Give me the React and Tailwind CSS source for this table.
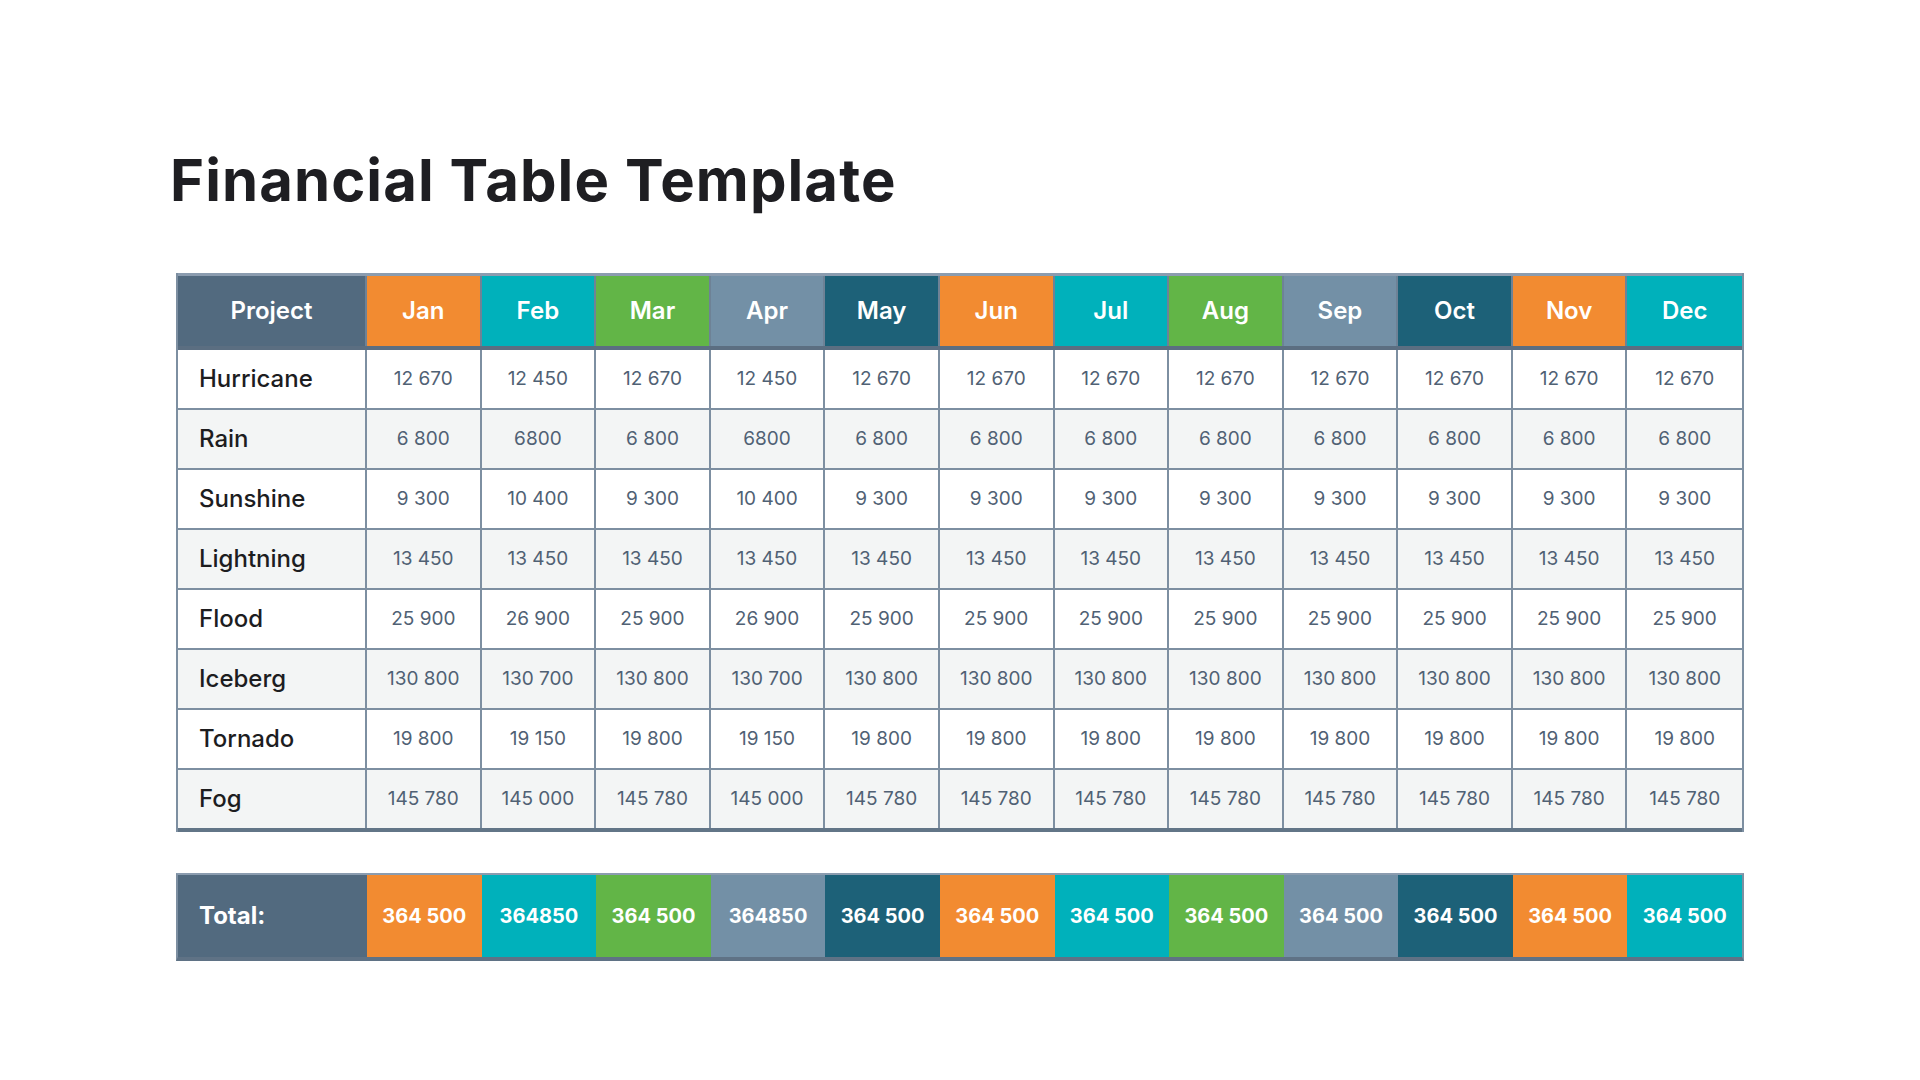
import React from "react";

// month header colours cycle through the same five swatches
const COLORS = {
  orange: "bg-[#f28b31]",
  teal: "bg-[#00b1bb]",
  green: "bg-[#62b547]",
  slate: "bg-[#7390a6]",
  dark: "bg-[#1d6178]",
};

const MONTHS = [
  ["Jan", COLORS.orange],
  ["Feb", COLORS.teal],
  ["Mar", COLORS.green],
  ["Apr", COLORS.slate],
  ["May", COLORS.dark],
  ["Jun", COLORS.orange],
  ["Jul", COLORS.teal],
  ["Aug", COLORS.green],
  ["Sep", COLORS.slate],
  ["Oct", COLORS.dark],
  ["Nov", COLORS.orange],
  ["Dec", COLORS.teal],
];

// first four months differ, the rest repeat the first value
function row(a, b) {
  return [a, b, a, b, ...Array(8).fill(a)];
}

const ROWS = [
  { name: "Hurricane", values: row("12 670", "12 450") },
  { name: "Rain", values: row("6 800", "6800") },
  { name: "Sunshine", values: row("9 300", "10 400") },
  { name: "Lightning", values: Array(12).fill("13 450") },
  { name: "Flood", values: row("25 900", "26 900") },
  { name: "Iceberg", values: row("130 800", "130 700") },
  { name: "Tornado", values: row("19 800", "19 150") },
  { name: "Fog", values: row("145 780", "145 000") },
];

const TOTALS = row("364 500", "364850");

const GRID = "grid grid-cols-[189px_repeat(12,minmax(0,1fr))]";

export default function App() {
  return (
    <div className="min-h-screen bg-white pl-[173px] pt-[151px] font-['Inter',sans-serif]">
      <h1 className="-ml-[3px] text-[58px] font-bold leading-none tracking-[1.1px] text-[#1e1e22]">
        Financial Table Template
      </h1>

      <div className="mt-[64px] ml-[3px] w-[1568px] border-x-2 border-[#7d8fa1]">
        {/* header */}
        <div className={`${GRID} h-[77px] border-t-[3px] border-b-4 border-t-[#8b9caf] border-b-[#5b6e81]`}>
          <div className="flex items-center justify-center bg-[#526a7f] border-r-2 border-[#6e8296] text-[24px] font-semibold text-white">
            Project
          </div>
          {MONTHS.map(([m, bg], i) => (
            <div
              key={m}
              className={`flex items-center justify-center ${bg} ${i < 11 ? "border-r-2 border-[#6e8296]" : ""} text-[24px] font-semibold text-white`}
            >
              {m}
            </div>
          ))}
        </div>

        {/* body */}
        {ROWS.map((r, ri) => (
          <div
            key={r.name}
            className={`${GRID} ${ri === ROWS.length - 1 ? "h-[62px] border-b-4 border-[#627587]" : "h-[60px] border-b-2 border-[#7d8fa1]"} ${ri % 2 ? "bg-[#f3f5f5]" : "bg-white"}`}
          >
            <div className="flex items-center border-r-2 border-[#7d8fa1] pl-[21px] text-[24px] font-medium text-[#1d1d1f]">
              {r.name}
            </div>
            {r.values.map((v, i) => (
              <div
                key={i}
                className={`flex items-center justify-center ${i < 11 ? "border-r-2 border-[#7d8fa1]" : ""} text-[19px] text-[#506174]`}
              >
                {v}
              </div>
            ))}
          </div>
        ))}
      </div>

      {/* totals */}
      <div className={`${GRID} mt-[41px] ml-[3px] h-[88px] w-[1568px] border-x-2 border-t-2 border-b-4 border-x-[#7d8fa1] border-t-[#8b9caf] border-b-[#5f7285]`}>
        <div className="flex items-center bg-[#526a7f] pl-[21px] text-[24px] font-bold text-white">
          Total:
        </div>
        {TOTALS.map((v, i) => (
          <div
            key={i}
            className={`flex items-center justify-center ${MONTHS[i][1]} text-[20px] font-bold text-white`}
          >
            {v}
          </div>
        ))}
      </div>
    </div>
  );
}
